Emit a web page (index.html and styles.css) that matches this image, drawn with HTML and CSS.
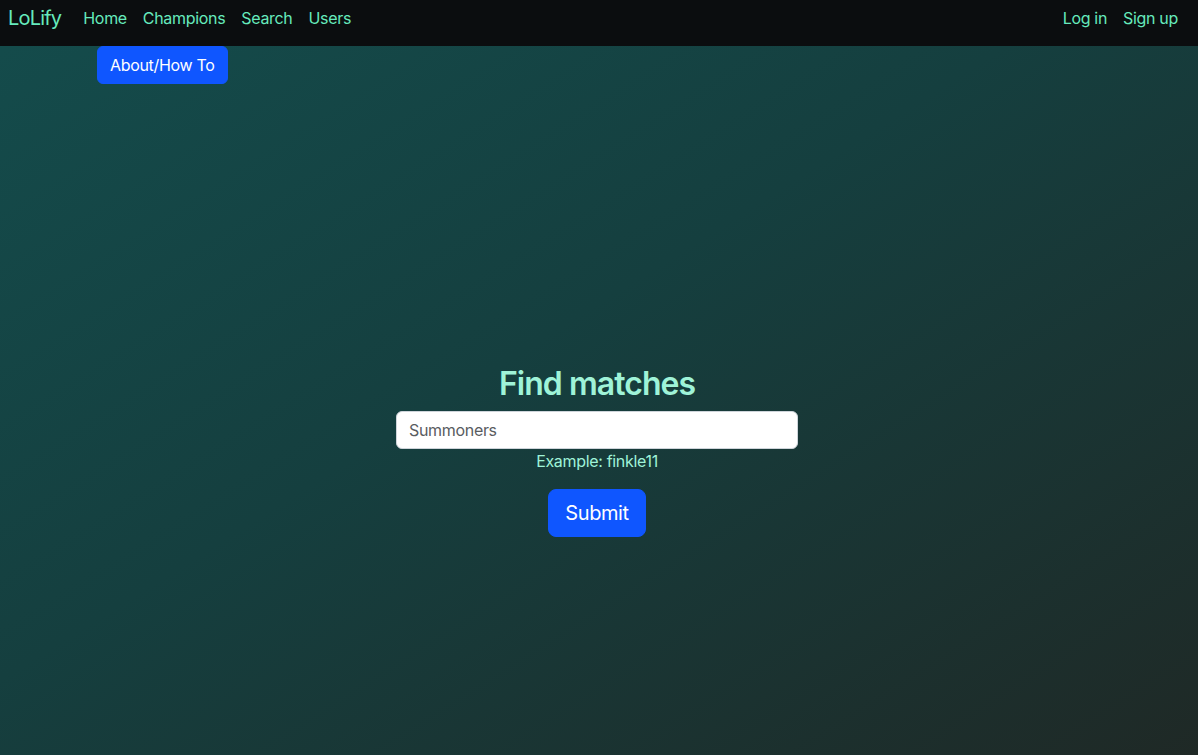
FILE: index.html
```html
<!DOCTYPE html>
<html lang="en">
<head>
<meta charset="utf-8">
<title>LoLify</title>
<link rel="stylesheet" href="styles.css">
</head>
<body>
<nav class="navbar">
  <a class="brand" href="#">LoLify</a>
  <ul class="nav">
    <li><a class="nav-link" href="#">Home</a></li>
    <li><a class="nav-link" href="#">Champions</a></li>
    <li><a class="nav-link" href="#">Search</a></li>
    <li><a class="nav-link" href="#">Users</a></li>
  </ul>
  <ul class="nav nav-right">
    <li><a class="nav-link" href="#">Log in</a></li>
    <li><a class="nav-link" href="#">Sign up</a></li>
  </ul>
</nav>
<div class="about-row">
  <a class="btn btn-primary" href="#">About/How To</a>
</div>
<main class="search">
  <h2 class="title">Find matches</h2>
  <form class="search-form">
    <input class="form-control" type="text" placeholder="Summoners">
    <div class="hint">Example: finkle11</div>
    <button class="btn btn-primary btn-lg" type="button">Submit</button>
  </form>
</main>
</body>
</html>
```

FILE: styles.css
```css
* { box-sizing: border-box; }
html, body { height: 100%; }
body {
  margin: 0;
  font-family: Inter, "Noto Sans", "Liberation Sans", sans-serif;
  font-size: 16px;
  line-height: 1.5;
  letter-spacing: -0.02em;
  color: #fff;
  background: linear-gradient(to bottom right, #144c4c 0%, #153f3f 45%, #1f2926 100%);
  min-height: 755px;
}
a { text-decoration: none; }
.navbar {
  height: 46px;
  background: #0b0d0f;
  display: flex;
  align-items: flex-start;
  padding: 6px 12px 0 8px;
}
.brand {
  color: #66eabd;
  font-size: 20px;
  line-height: 24px;
  margin-right: 14px;
  letter-spacing: -0.04em;
}
.nav {
  list-style: none;
  margin: 0;
  padding: 0;
  display: flex;
}
.nav-right { margin-left: auto; }
.nav-link {
  display: block;
  color: #66eabd;
  padding: 0 8px;
  line-height: 24px;
}
.about-row {
  padding-left: 97px;
}
.btn {
  display: inline-block;
  border: 1px solid #0f56ff;
  background: #0f56ff;
  color: #fff;
  font-family: inherit;
  font-size: 16px;
  line-height: 24px;
  letter-spacing: -0.02em;
  padding: 6px 12px;
  border-radius: 6px;
  cursor: pointer;
}
.btn-lg {
  font-size: 20px;
  line-height: 30px;
  padding: 8px 16px;
  border-radius: 8px;
  margin-top: 16px;
}
.search {
  display: flex;
  flex-direction: column;
  align-items: center;
  padding-top: 281px;
  padding-right: 4px;
}
.title {
  margin: 0 0 8px;
  font-size: 32px;
  line-height: 38px;
  font-weight: 600;
  letter-spacing: -0.03em;
  color: #9ff3d8;
}
.search-form {
  display: flex;
  flex-direction: column;
  align-items: center;
}
.form-control {
  width: 402px;
  height: 38px;
  border: 1px solid #ced4da;
  border-radius: 6px;
  padding: 6px 12px;
  font-family: inherit;
  font-size: 16px;
  letter-spacing: -0.02em;
  color: #212529;
  background: #fff;
}
.form-control::placeholder { color: #595c5f; }
.hint {
  color: #9ff3d8;
  line-height: 24px;
}
```
